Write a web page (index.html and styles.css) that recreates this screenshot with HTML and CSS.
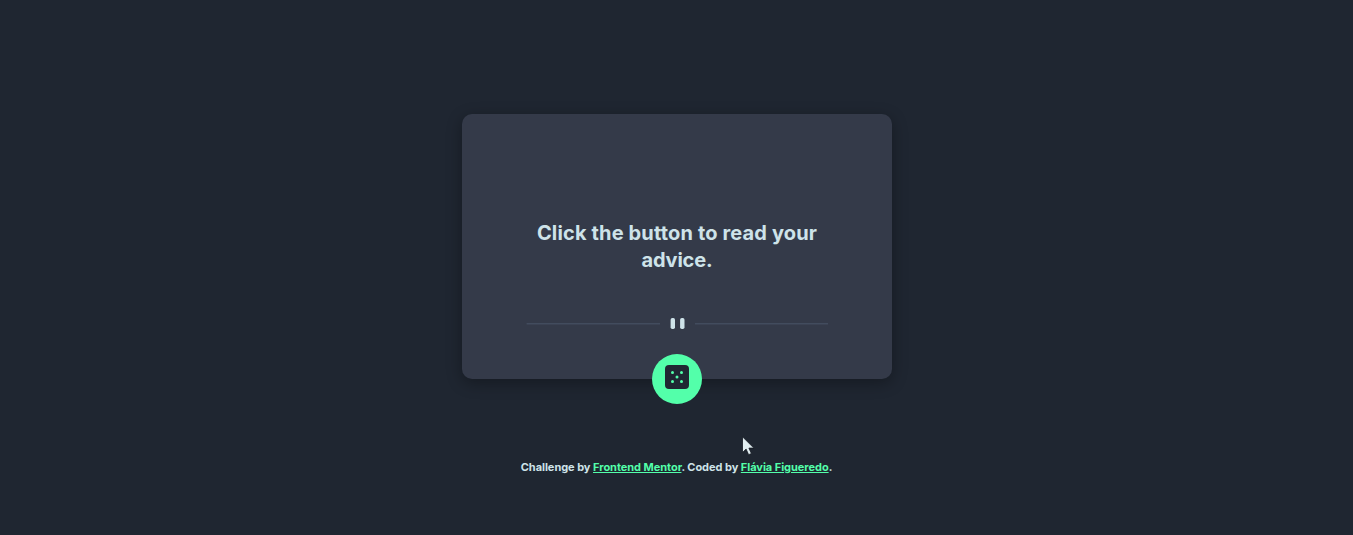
FILE: index.html
```html
<!DOCTYPE html>
<html lang="en">
<head>
<meta charset="utf-8">
<title>Advice generator</title>
<link rel="stylesheet" href="styles.css">
</head>
<body>
<main class="card">
  <h1 class="advice"><span class="advice-line">Click the button to read your</span> <span class="advice-line advice-end">advice.</span></h1>
  <svg class="divider" width="302" height="12" viewBox="0 0 302 12">
    <path fill="#4f5d74" fill-opacity=".5" d="M.6 5H134v1.5H.6zM169 5h133v1.5H169z"/>
    <g fill="#cee3e9"><rect x="144.6" y="0" width="4.4" height="11" rx="1.7"/><rect x="154.1" y="0" width="4.4" height="11" rx="1.7"/></g>
  </svg>
  <button class="dice" type="button" aria-label="New advice">
    <svg width="24" height="24" viewBox="0 0 24 24">
      <rect width="24" height="24" rx="4" fill="#202733"/>
      <g fill="#53ffaa"><circle cx="7.5" cy="7.5" r="1.5"/><circle cx="16.5" cy="7.5" r="1.5"/><circle cx="12" cy="12" r="1.5"/><circle cx="7.5" cy="16.5" r="1.5"/><circle cx="16.5" cy="16.5" r="1.5"/></g>
    </svg>
  </button>
</main>
<footer class="attribution">Challenge by <a href="#">Frontend Mentor</a>. Coded by <a href="#">Flávia Figueredo</a>.</footer>
<svg class="cursor" width="14" height="20" viewBox="0 0 14 20"><path d="M.5 .8v15.7l3.6-3.4 2.5 5.6 2.8-1.2-2.5-5.4h5z" fill="#e1edf1" stroke="#141922" stroke-width=".8"/></svg>
</body>
</html>
```
FILE: styles.css
```css
* { box-sizing: border-box; }
body {
  margin: 0;
  height: 535px;
  padding-top: 114px;
  display: flex;
  flex-direction: column;
  align-items: center;
  overflow: hidden;
  background: #1f2631;
  color: #cee3e9;
  font-family: Inter, "Open Sans", sans-serif;
}
.card {
  width: 430px;
  height: 265px;
  margin-left: 1px;
  padding-top: 106px;
  display: flex;
  flex-direction: column;
  align-items: center;
  flex-shrink: 0;
  border-radius: 10px;
  background: #343a49;
  box-shadow: 0 4px 16px rgba(0, 0, 0, .32);
}
.advice {
  margin: 0;
  font-size: 20px;
  font-weight: 700;
  line-height: 27px;
  letter-spacing: .15px;
  text-align: center;
  white-space: nowrap;
}
.advice-line { display: block; }
.advice-end { letter-spacing: -.2px; }
.divider {
  display: block;
  margin-top: 44px;
  flex-shrink: 0;
}
.dice {
  width: 50px;
  height: 50px;
  margin-top: 24px;
  padding: 0 0 4px;
  display: flex;
  align-items: center;
  justify-content: center;
  flex-shrink: 0;
  border: 0;
  border-radius: 50%;
  background: #53ffaa;
}
.attribution {
  margin-top: 80px;
  font-size: 11px;
  font-weight: 700;
  line-height: 16px;
  letter-spacing: -.04px;
  white-space: nowrap;
}
.attribution a { color: #53ffaa; }
.cursor {
  position: absolute;
  left: 742px;
  top: 436px;
}
```
